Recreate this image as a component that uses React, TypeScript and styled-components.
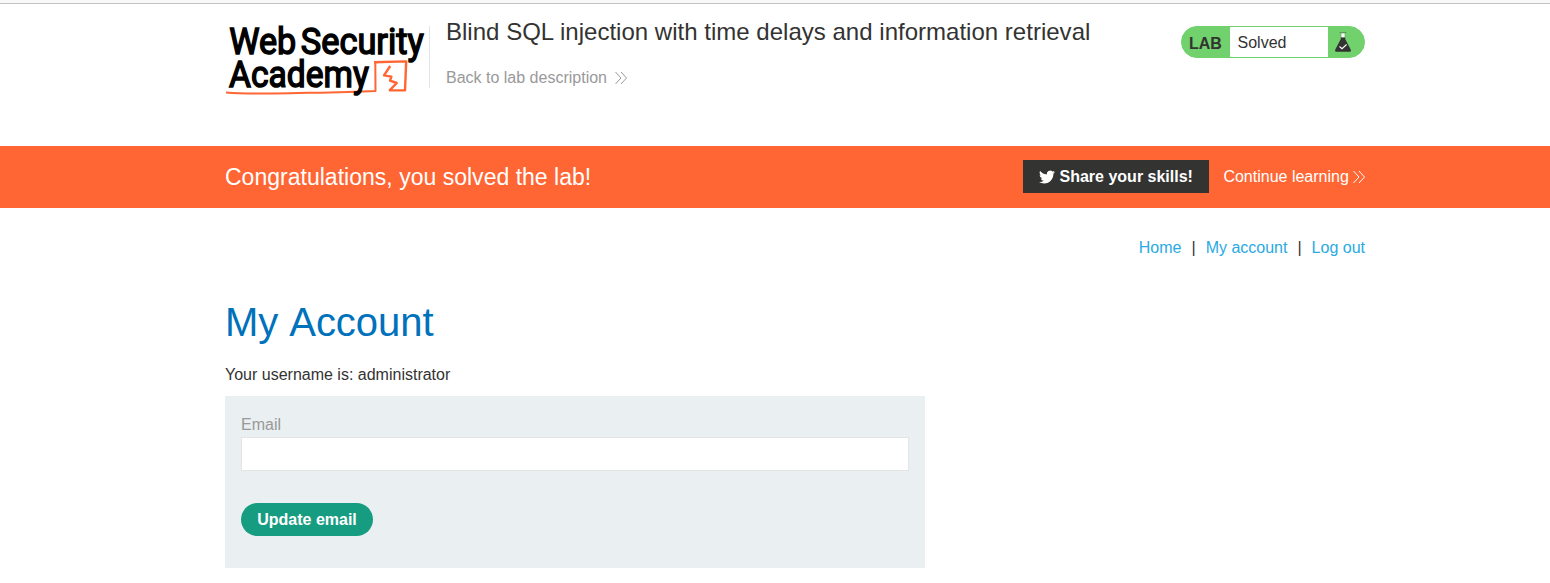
import React from "react";
import styled, { createGlobalStyle, css } from "styled-components";

const GlobalStyle = createGlobalStyle`
  * { box-sizing: border-box; }
  body {
    margin: 0;
    background: #fff;
    color: #333332;
    font: 16px/20px "Liberation Sans", Arial, sans-serif;
    overflow: hidden;
  }
  a { text-decoration: none; }
`;

const BrowserEdge = styled.div`
  height: 4px;
  background: #f8f8f8;
  border-bottom: 1px solid #c3c3c3;
`;

const Container = styled.div`
  width: 1140px;
  margin: 0 0 0 225px;
`;

const HeaderRow = styled(Container)`
  display: flex;
  align-items: flex-start;
  height: 142px;
  padding-top: 16px;
`;

const Logo = styled.svg`
  display: block;
  flex: none;
  margin-top: 2px;
  overflow: visible;
`;

const TitleBlock = styled.div`
  flex: 1;
  margin: 6px 0 0 4px;
  height: 62px;
  padding-left: 16px;
  border-left: 1px solid #e4e4e4;
`;

const Title = styled.h2`
  margin: -8px 0 0;
  font-size: 24px;
  line-height: 28px;
  font-weight: 400;
  letter-spacing: 0.015px;
  white-space: nowrap;
`;

const BackLink = styled.a`
  display: flex;
  align-items: center;
  gap: 8px;
  margin-top: 22px;
  color: #999;
`;

const LabStatus = styled.div`
  display: flex;
  width: 184px;
  height: 32px;
  margin-top: 6px;
  border: 1px solid #70d16d;
  border-radius: 16px;
  background: #70d16d;
  overflow: hidden;
`;

const LabTag = styled.span`
  width: 48px;
  padding-left: 7px;
  font-weight: 700;
  line-height: 34px;
`;

const LabState = styled.span`
  width: 98px;
  padding-left: 7.5px;
  background: #fff;
  line-height: 32px;
`;

const FlaskIcon = styled.svg`
  display: block;
  margin: 5px 0 0 7px;
`;

const Banner = styled.section`
  height: 62px;
  background: #ff6633;
  color: #fff;
`;

const BannerRow = styled(Container)`
  display: flex;
  align-items: center;
  height: 61px;
`;

const BannerText = styled.h4`
  flex: 1;
  margin: 0;
  font-size: 23px;
  font-weight: 400;
  letter-spacing: 0.015px;
`;

const ShareButton = styled.a`
  display: flex;
  align-items: center;
  width: 186px;
  height: 33px;
  padding-left: 16px;
  gap: 4.5px;
  background: #333332;
  color: #fff;
  font-weight: 700;
  white-space: nowrap;
`;

const ContinueLink = styled.a`
  display: flex;
  align-items: center;
  justify-content: space-between;
  width: 141.6px;
  margin-left: 14.4px;
  color: #fff;
  white-space: nowrap;
`;

const Nav = styled(Container)`
  display: flex;
  justify-content: flex-end;
  gap: 10px;
  padding-top: 30px;
`;

const NavLink = styled.a`
  color: #29aae2;
`;

const Main = styled(Container)`
  padding-top: 40px;
`;

const Heading = styled.h1`
  margin: 0;
  color: #0071bb;
  font-size: 40px;
  line-height: 48px;
  font-weight: 400;
  font-kerning: none;
  letter-spacing: -0.05px;
`;

const Username = styled.p`
  margin: 19px 0 11px;
`;

const Form = styled.form`
  width: 700px;
  height: 172px;
  padding: 19px 16px 0;
  background: #eaeff2;
`;

const controlText = css`
  font: 16px/20px "Liberation Sans", Arial, sans-serif;
`;

const Label = styled.label`
  display: block;
  color: #999;
`;

const Input = styled.input`
  ${controlText}
  display: block;
  width: 100%;
  height: 34px;
  margin-top: 2px;
  padding: 0 8px;
  border: 1px solid #e4e4e4;
  background: #fff;
`;

const SubmitButton = styled.button`
  ${controlText}
  display: block;
  width: 132px;
  height: 33px;
  margin-top: 32px;
  padding: 0;
  border: 0;
  border-radius: 17px;
  background: #169c80;
  color: #fff;
  font-weight: 700;
`;

function Chevrons() {
  return (
    <svg width="12" height="14" viewBox="0 0 12 14" fill="none" stroke="currentColor" strokeWidth="1">
      <path d="M0.5 1 6 7 0.5 13M6 1l5.5 6L6 13" />
    </svg>
  );
}

function AcademyLogo() {
  const word = {
    fontFamily: "Roboto, 'Liberation Sans', sans-serif",
    fontSize: 37,
    fontWeight: 400,
    lengthAdjust: "spacingAndGlyphs",
    stroke: "#000",
    strokeWidth: 1.5,
  };
  return (
    <Logo width="200" height="76" viewBox="225 22 200 76">
      <path d="M226 92.4C246 94 268 93.6 290 93.2C320 92.6 346 92.4 375.5 91L375.3 62" fill="none" stroke="#ff6633" strokeWidth="2" strokeLinejoin="round" />
      <path d="M374 62.2L406.2 61.4L405 90.4L389.8 90.2L396.8 83L390 80.6L391.4 76.6L384 75.4L390.2 66" fill="none" stroke="#ff6633" strokeWidth="2.4" strokeLinejoin="round" />
      <text {...word} x="229.2" y="54.2" textLength="67">Web</text>
      <text {...word} x="300.8" y="54.2" textLength="123">Security</text>
      <text {...word} x="229" y="86.8" textLength="139.8">Academy</text>
    </Logo>
  );
}

export default function App() {
  return (
    <>
      <GlobalStyle />
      <BrowserEdge />
      <HeaderRow as="header">
        <AcademyLogo />
        <TitleBlock>
          <Title>Blind SQL injection with time delays and information retrieval</Title>
          <BackLink>Back to lab description <Chevrons /></BackLink>
        </TitleBlock>
        <LabStatus>
          <LabTag>LAB</LabTag>
          <LabState>Solved</LabState>
          <FlaskIcon width="16" height="20" viewBox="0 0 16 20">
            <path d="M4.6 .5h6.8" stroke="#5a9e55" strokeWidth="1" />
            <path d="M6 1h4v5H6z" fill="#fff" stroke="#5a9e55" strokeWidth=".6" />
            <path d="M5.8 5.4h4.4v1.5l5.5 10.7c.5 1.1 0 2.2-1.2 2.2h-13C.3 19.8-.2 18.7.3 17.6L5.8 6.9z" fill="#333332" />
            <path d="m4.5 14.5 2.5 2.2 4.6-4.2" fill="none" stroke="#fff" strokeWidth="1.1" />
          </FlaskIcon>
        </LabStatus>
      </HeaderRow>
      <Banner>
        <BannerRow>
          <BannerText>Congratulations, you solved the lab!</BannerText>
          <ShareButton>
            <svg width="16" height="16" viewBox="0 0 24 24" fill="#fff">
              <path d="M23.95 4.57a10 10 0 0 1-2.82.77 4.96 4.96 0 0 0 2.16-2.72c-.95.55-2 .96-3.13 1.18a4.92 4.92 0 0 0-8.38 4.48C7.69 8.1 4.07 6.13 1.64 3.16a4.82 4.82 0 0 0-.67 2.48c0 1.71.87 3.21 2.19 4.1a4.9 4.9 0 0 1-2.23-.62v.06a4.92 4.92 0 0 0 3.95 4.83 5 5 0 0 1-2.21.08 4.94 4.94 0 0 0 4.6 3.42A9.87 9.87 0 0 1 0 19.54a13.99 13.99 0 0 0 7.55 2.21c9.05 0 14-7.5 14-13.98 0-.21 0-.42-.02-.63a9.94 9.94 0 0 0 2.42-2.57z" />
            </svg>
            Share your skills!
          </ShareButton>
          <ContinueLink>Continue learning <Chevrons /></ContinueLink>
        </BannerRow>
      </Banner>
      <Nav as="nav">
        <NavLink>Home</NavLink>
        <span>|</span>
        <NavLink>My account</NavLink>
        <span>|</span>
        <NavLink>Log out</NavLink>
      </Nav>
      <Main as="main">
        <Heading>My Account</Heading>
        <Username>Your username is: administrator</Username>
        <Form>
          <Label htmlFor="email">Email</Label>
          <Input id="email" type="email" />
          <SubmitButton type="button">Update email</SubmitButton>
        </Form>
      </Main>
    </>
  );
}
